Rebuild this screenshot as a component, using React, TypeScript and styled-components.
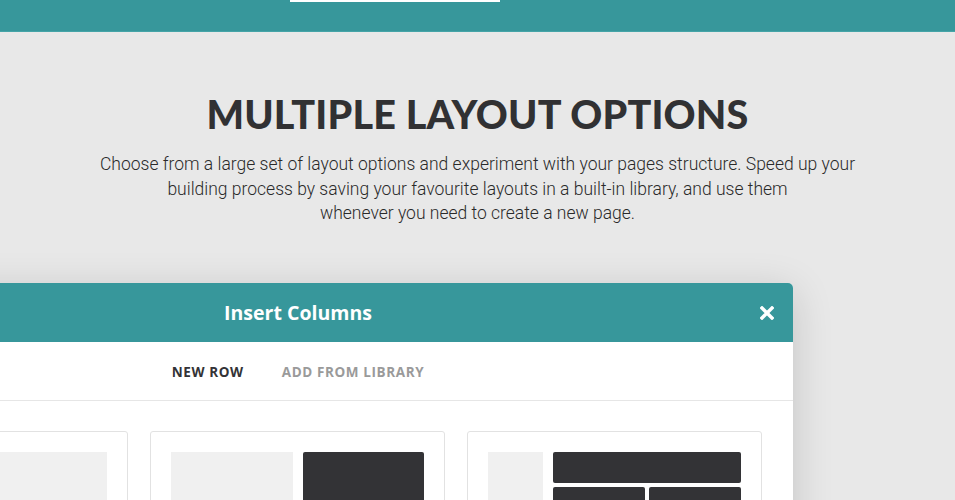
import React from 'react';
import styled, { createGlobalStyle } from 'styled-components';

const GlobalStyle = createGlobalStyle`
  html, body {
    margin: 0;
    padding: 0;
    background: #e8e8e8;
    overflow: hidden;
  }
  * { box-sizing: border-box; }
`;

const Page = styled.div`
  width: 955px;
  height: 500px;
  overflow: hidden;
  background: #e8e8e8;
`;

const TopBar = styled.div`
  height: 32px;
  background: #37979b;
  border-bottom: 1px solid #45a4a7;
  display: flex;
  padding-left: 290px;
`;

const ActiveMark = styled.div`
  width: 210px;
  height: 2px;
  background: #fff;
`;

const Intro = styled.section`
  display: flex;
  flex-direction: column;
  align-items: center;
  padding-top: 57px;
`;

const Heading = styled.h1`
  margin: 0;
  font-family: Lato, "Liberation Sans", sans-serif;
  font-weight: 900;
  font-size: 39.5px;
  line-height: 50px;
  letter-spacing: 0.2px;
  color: #313133;
`;

const Lead = styled.p`
  margin: 13px 0 0;
  width: 800px;
  text-align: center;
  font-family: Roboto, "Liberation Sans", sans-serif;
  font-weight: 300;
  font-size: 17.5px;
  line-height: 24.5px;
  color: #2a2a2a;
`;

const Modal = styled.div`
  align-self: flex-start;
  margin: 57px 0 0 -197px;
  width: 990px;
  flex-shrink: 0;
  background: #fff;
  border-radius: 5px 5px 0 0;
  box-shadow: 0 8px 40px rgba(0, 0, 0, 0.16);
`;

const ModalHeader = styled.div`
  height: 59px;
  background: #37979b;
  border-radius: 5px 5px 0 0;
  display: flex;
  align-items: center;
  justify-content: center;
  position: relative;
`;

const ModalTitle = styled.h2`
  margin: 0;
  font-family: "Open Sans", "Liberation Sans", sans-serif;
  font-weight: 700;
  font-size: 19.5px;
  color: #fff;
`;

const Close = styled.button`
  position: absolute;
  right: 17px;
  top: 21px;
  width: 18px;
  height: 18px;
  padding: 0;
  border: none;
  background: none;
  cursor: pointer;
  display: flex;
  align-items: center;
  justify-content: center;
`;

const Tabs = styled.div`
  height: 59px;
  padding-top: 2px;
  border-bottom: 1px solid #e6e6e6;
  display: flex;
  align-items: center;
  justify-content: center;
  gap: 38px;
`;

const Tab = styled.span<{ $active?: boolean }>`
  font-family: "Open Sans", "Liberation Sans", sans-serif;
  font-weight: 700;
  font-size: 13.5px;
  letter-spacing: 0.6px;
  color: ${(p) => (p.$active ? '#333336' : '#9a9a9a')};
`;

const Cards = styled.div`
  display: grid;
  grid-template-columns: repeat(3, 295px);
  gap: 22px;
  padding: 30px 31px 30px 30px;
`;

const Card = styled.div`
  height: 160px;
  border: 1px solid #e2e2e2;
  border-radius: 3px;
  padding: 20px;
  display: flex;
  gap: 10px;
`;

const Block = styled.div<{ $dark?: boolean; $w?: string }>`
  flex: ${(p) => p.$w || '1'};
  background: ${(p) => (p.$dark ? '#333336' : '#f0f0f0')};
  border-radius: ${(p) => (p.$dark ? '2px' : '0')};
`;

const Stack = styled.div`
  flex: 3.4;
  display: flex;
  flex-direction: column;
  gap: 4px;
`;

const SubRow = styled.div`
  flex: 2;
  display: flex;
  gap: 4px;
`;

export default function App() {
  return (
    <Page>
      <GlobalStyle />
      <TopBar>
        <ActiveMark />
      </TopBar>
      <Intro>
        <Heading>MULTIPLE LAYOUT OPTIONS</Heading>
        <Lead>
          Choose from a large set of layout options and experiment with your pages structure. Speed up your
          <br />
          building process by saving your favourite layouts in a built-in library, and use them
          <br />
          whenever you need to create a new page.
        </Lead>
        <Modal>
          <ModalHeader>
            <ModalTitle>Insert Columns</ModalTitle>
            <Close aria-label="Close">
              <svg width="14" height="14" viewBox="0 0 14 14">
                <path d="M2 2 L12 12 M12 2 L2 12" stroke="#fff" strokeWidth="3.4" strokeLinecap="square" />
              </svg>
            </Close>
          </ModalHeader>
          <Tabs>
            <Tab $active>NEW ROW</Tab>
            <Tab>ADD FROM LIBRARY</Tab>
          </Tabs>
          <Cards>
            <Card>
              <Block />
            </Card>
            <Card>
              <Block />
              <Block $dark />
            </Card>
            <Card>
              <Block $w="1" />
              <Stack>
                <Block $dark $w="0 0 31px" />
                <SubRow>
                  <Block $dark />
                  <Block $dark />
                </SubRow>
              </Stack>
            </Card>
          </Cards>
        </Modal>
      </Intro>
    </Page>
  );
}
